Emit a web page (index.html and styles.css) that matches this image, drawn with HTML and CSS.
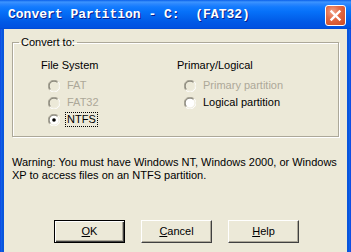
FILE: index.html
```html
<!DOCTYPE html>
<html>
<head>
<meta charset="utf-8">
<link rel="stylesheet" href="styles.css">
</head>
<body>
<div class="window">
  <div class="titlebar">
    <span class="title">Convert Partition - C:&nbsp; (FAT32)</span>
    <div class="close">
      <svg width="13" height="13" viewBox="0 0 13 13"><path d="M2.5 2.5 L10.5 10.5 M10.5 2.5 L2.5 10.5" stroke="#fff" stroke-width="2.4" stroke-linecap="square"/></svg>
    </div>
  </div>
  <div class="client">
    <fieldset class="group">
      <legend>Convert to:</legend>
      <div class="cols">
        <div class="col">
          <div class="col-title">File System</div>
          <div class="radio disabled">
            <svg class="rb" width="12" height="12" viewBox="0 0 12 12"><circle cx="6" cy="6" r="5" fill="#ECE9D8"/><path d="M1.8 10.2 A5.5 5.5 0 0 1 10.2 1.8" fill="none" stroke="#ACA899"/><path d="M2.5 9.5 A4.5 4.5 0 0 1 9.5 2.5" fill="none" stroke="#716F64"/><path d="M10.2 1.8 A5.5 5.5 0 0 1 1.8 10.2" fill="none" stroke="#fff"/><path d="M9.5 2.5 A4.5 4.5 0 0 1 2.5 9.5" fill="none" stroke="#F1EFE2"/></svg>
            <span class="lbl">FAT</span>
          </div>
          <div class="radio disabled">
            <svg class="rb" width="12" height="12" viewBox="0 0 12 12"><circle cx="6" cy="6" r="5" fill="#ECE9D8"/><path d="M1.8 10.2 A5.5 5.5 0 0 1 10.2 1.8" fill="none" stroke="#ACA899"/><path d="M2.5 9.5 A4.5 4.5 0 0 1 9.5 2.5" fill="none" stroke="#716F64"/><path d="M10.2 1.8 A5.5 5.5 0 0 1 1.8 10.2" fill="none" stroke="#fff"/><path d="M9.5 2.5 A4.5 4.5 0 0 1 2.5 9.5" fill="none" stroke="#F1EFE2"/></svg>
            <span class="lbl">FAT32</span>
          </div>
          <div class="radio">
            <svg class="rb" width="12" height="12" viewBox="0 0 12 12"><circle cx="6" cy="6" r="5" fill="#fff"/><path d="M1.8 10.2 A5.5 5.5 0 0 1 10.2 1.8" fill="none" stroke="#ACA899"/><path d="M2.5 9.5 A4.5 4.5 0 0 1 9.5 2.5" fill="none" stroke="#716F64"/><path d="M10.2 1.8 A5.5 5.5 0 0 1 1.8 10.2" fill="none" stroke="#fff"/><path d="M9.5 2.5 A4.5 4.5 0 0 1 2.5 9.5" fill="none" stroke="#F1EFE2"/><circle cx="6" cy="6" r="1.8" fill="#000"/></svg>
            <span class="lbl focus">NTFS</span>
          </div>
        </div>
        <div class="col">
          <div class="col-title">Primary/Logical</div>
          <div class="radio disabled">
            <svg class="rb" width="12" height="12" viewBox="0 0 12 12"><circle cx="6" cy="6" r="5" fill="#ECE9D8"/><path d="M1.8 10.2 A5.5 5.5 0 0 1 10.2 1.8" fill="none" stroke="#ACA899"/><path d="M2.5 9.5 A4.5 4.5 0 0 1 9.5 2.5" fill="none" stroke="#716F64"/><path d="M10.2 1.8 A5.5 5.5 0 0 1 1.8 10.2" fill="none" stroke="#fff"/><path d="M9.5 2.5 A4.5 4.5 0 0 1 2.5 9.5" fill="none" stroke="#F1EFE2"/></svg>
            <span class="lbl">Primary partition</span>
          </div>
          <div class="radio">
            <svg class="rb" width="12" height="12" viewBox="0 0 12 12"><circle cx="6" cy="6" r="5" fill="#fff"/><path d="M1.8 10.2 A5.5 5.5 0 0 1 10.2 1.8" fill="none" stroke="#ACA899"/><path d="M2.5 9.5 A4.5 4.5 0 0 1 9.5 2.5" fill="none" stroke="#716F64"/><path d="M10.2 1.8 A5.5 5.5 0 0 1 1.8 10.2" fill="none" stroke="#fff"/><path d="M9.5 2.5 A4.5 4.5 0 0 1 2.5 9.5" fill="none" stroke="#F1EFE2"/></svg>
            <span class="lbl">Logical partition</span>
          </div>
        </div>
      </div>
    </fieldset>
    <p class="warning">Warning: You must have Windows NT, Windows 2000, or Windows XP to access files on an NTFS partition.</p>
    <div class="buttons">
      <div class="btn default"><u>O</u>K</div>
      <div class="btn"><u>C</u>ancel</div>
      <div class="btn"><u>H</u>elp</div>
    </div>
  </div>
</div>
</body>
</html>
```

FILE: styles.css
```css
* { box-sizing: border-box; }
html, body { margin: 0; padding: 0; }
body {
  width: 351px;
  height: 252px;
  overflow: hidden;
  background: #0054E3;
  font-family: "Liberation Sans", Arial, sans-serif;
  font-size: 11px;
  color: #000;
}
.window {
  width: 351px;
  height: 252px;
  display: flex;
  flex-direction: column;
  background: linear-gradient(90deg, #0831D9 0, #166AEE 1px, #0855DD 2px, #0855DD calc(100% - 2px), #166AEE calc(100% - 1px), #0831D9 100%);
}
.titlebar {
  height: 29px;
  flex: none;
  display: flex;
  align-items: center;
  justify-content: space-between;
  padding: 0 5px 1px 8px;
  background: linear-gradient(#0A5FE9 0%, #3D95FF 7%, #2A86FE 14%, #137BFE 24%, #0671F9 40%, #0364EE 60%, #0059E6 76%, #0054E3 88%, #0053E2 94%, #0048D4 100%);
}
.title {
  font-family: "Liberation Mono", "DejaVu Sans Mono", monospace;
  font-weight: bold;
  font-size: 13px;
  color: #fff;
  white-space: pre;
  text-shadow: 1px 1px 0 #0A1E8C;
}
.close {
  width: 21px;
  height: 21px;
  border: 1px solid #fff;
  border-radius: 3px;
  background: radial-gradient(circle at 35% 30%, #F2A48A 0%, #E26A45 40%, #CC4820 100%);
  display: flex;
  align-items: center;
  justify-content: center;
  margin-top: 2px;
}
.client {
  flex: 1;
  background: #ECE9D8;
  margin: 0 4px 0 4px;
  padding: 7px 8px 0 8px;
}
.group {
  margin: 0;
  padding: 0 0 4px 0;
  border: 1px solid #ACA899;
  border-radius: 0;
  box-shadow: inset 1px 1px 0 #fff, 1px 1px 0 #fff;
  height: 101px;
}
.group legend {
  margin-left: 6px;
  padding: 0 2px;
  line-height: 13px;
}
.cols {
  display: grid;
  grid-template-columns: 136px 1fr;
  padding-left: 28px;
}
.col-title {
  padding-top: 10px;
  line-height: 13px;
  margin-bottom: 5px;
}
.radio {
  height: 17px;
  display: flex;
  align-items: center;
  padding-left: 7px;
  gap: 6px;
}
.radio.disabled .lbl { color: #ACA899; }
.lbl { line-height: 13px; padding: 0 1px; }
.lbl.focus { outline: 1px dotted #000; }
.rb { flex: none; }
.warning {
  margin: 19px 0 0 0;
  line-height: 13px;
}
.buttons {
  margin-top: 38px;
  display: flex;
  gap: 16px;
  padding-left: 42px;
}
.btn {
  width: 71px;
  height: 23px;
  background: #ECE9D8;
  border-top: 1px solid #fff;
  border-left: 1px solid #fff;
  border-right: 1px solid #404040;
  border-bottom: 1px solid #404040;
  box-shadow: inset -1px -1px 0 #ACA899;
  display: flex;
  align-items: center;
  justify-content: center;
  line-height: 13px;
}
.btn.default {
  border: 1px solid #000;
  box-shadow: inset 1px 1px 0 #fff, inset -1px -1px 0 #404040, inset -2px -2px 0 #ACA899;
}
```
